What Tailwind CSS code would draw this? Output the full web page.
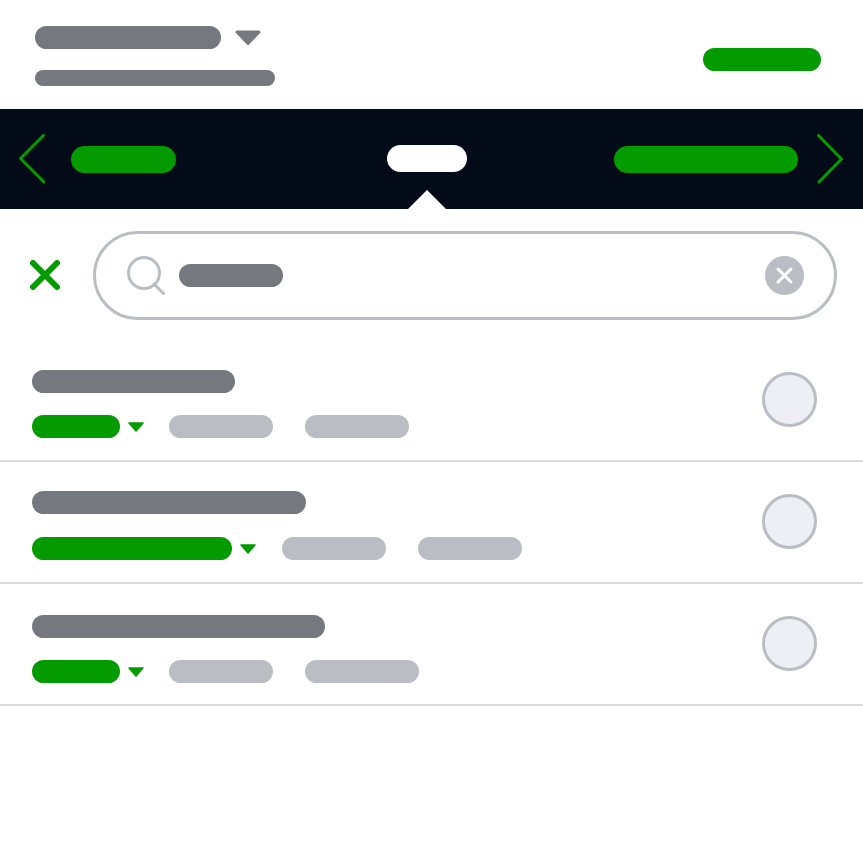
<!DOCTYPE html>
<html>
<head>
<meta charset="utf-8">
<script src="https://cdn.jsdelivr.net/npm/@tailwindcss/browser@4"></script>
</head>
<body class="bg-white">
<div class="w-[863px] h-[863px] overflow-hidden bg-white flex flex-col">
  <header class="h-[109px] shrink-0 flex items-start justify-between pl-[35px] pr-[42px]">
    <div class="pt-[26px] flex flex-col gap-[21px]">
      <div class="flex items-start gap-[14px]">
        <div class="w-[186px] h-[23px] rounded-full bg-[#76787f]"></div>
        <svg class="mt-[4px]" width="26" height="15" viewBox="0 0 26 15"><path d="M2 2H24L13 13.500Z" fill="#76787f" stroke="#76787f" stroke-width="3" stroke-linejoin="round"/></svg>
      </div>
      <div class="w-[240px] h-[16px] rounded-full bg-[#76787f]"></div>
    </div>
    <div class="mt-[48px] w-[118px] h-[23px] rounded-full bg-[#049b00]"></div>
  </header>

  <nav class="relative h-[100px] shrink-0 bg-[#030b18] flex items-center justify-between pl-[19px] pr-[20px]">
    <div class="flex items-center gap-[26px]">
      <svg width="26" height="50" viewBox="0 0 26 50" fill="none"><path d="M24.500 1.500L1.500 24.500L25 48" stroke="#049b00" stroke-width="3" stroke-linecap="round"/></svg>
      <div class="w-[105px] h-[27px] rounded-full bg-[#049b00]"></div>
    </div>
    <div class="absolute left-[387px] top-[36px] w-[80px] h-[27px] rounded-full bg-white"></div>
    <svg class="absolute left-[408px] bottom-0" width="38" height="19" viewBox="0 0 38 19"><path d="M0 19L19 0L38 19Z" fill="#fff"/></svg>
    <div class="flex items-center gap-[19px]">
      <div class="w-[184px] h-[27px] rounded-full bg-[#049b00]"></div>
      <svg width="26" height="50" viewBox="0 0 26 50" fill="none"><path d="M1.500 1.500L24.500 25L2 48" stroke="#049b00" stroke-width="3" stroke-linecap="round"/></svg>
    </div>
  </nav>

  <section class="h-[130px] shrink-0 flex items-start pl-[30px] pr-[26px] pt-[22px]">
    <svg class="mt-[29px] shrink-0" width="30" height="30" viewBox="0 0 30 30" fill="none"><path d="M3 3L27 27M27 3L3 27" stroke="#049b00" stroke-width="6" stroke-linecap="round"/></svg>
    <div class="ml-[33px] w-[744px] h-[89px] rounded-full border-[3px] border-[#babdc4] flex items-center pl-[30px] pr-[30px]">
      <svg class="shrink-0" width="40" height="42" viewBox="0 0 40 42" fill="none"><circle cx="18" cy="18" r="15.500" stroke="#babdc4" stroke-width="3"/><path d="M28 29L37.500 38.500" stroke="#babdc4" stroke-width="3" stroke-linecap="round"/></svg>
      <div class="ml-[13px] w-[104px] h-[23px] rounded-full bg-[#76787f]"></div>
      <div class="ml-auto w-[39px] h-[39px] rounded-full bg-[#babdc4] flex items-center justify-center">
        <svg width="19" height="19" viewBox="0 0 19 19" fill="none"><path d="M3 3L16 16M16 3L3 16" stroke="#fff" stroke-width="3" stroke-linecap="round"/></svg>
      </div>
    </div>
  </section>

  <ul class="flex flex-col">
    <li class="h-[123px] border-b-2 border-[#d9d9e1] flex items-start justify-between pl-[32px] pr-[46px]">
      <div class="pt-[31px] flex flex-col gap-[22px]">
        <div class="w-[203px] h-[23px] rounded-full bg-[#76787f]"></div>
        <div class="flex items-center">
          <div class="w-[88px] h-[23px] rounded-full bg-[#049b00]"></div>
          <svg class="ml-[8px]" width="16" height="10" viewBox="0 0 16 10"><path d="M1 1H15L8 9Z" fill="#049b00" stroke="#049b00" stroke-width="1.500" stroke-linejoin="round"/></svg>
          <div class="ml-[25px] w-[104px] h-[23px] rounded-full bg-[#babdc4]"></div>
          <div class="ml-[32px] w-[104px] h-[23px] rounded-full bg-[#babdc4]"></div>
        </div>
      </div>
      <div class="mt-[33px] w-[55px] h-[55px] rounded-full bg-[#eeeff4] border-[3px] border-[#babdc4]"></div>
    </li>
    <li class="h-[122px] border-b-2 border-[#d9d9e1] flex items-start justify-between pl-[32px] pr-[46px]">
      <div class="pt-[29px] flex flex-col gap-[23px]">
        <div class="w-[274px] h-[23px] rounded-full bg-[#76787f]"></div>
        <div class="flex items-center">
          <div class="w-[200px] h-[23px] rounded-full bg-[#049b00]"></div>
          <svg class="ml-[8px]" width="16" height="10" viewBox="0 0 16 10"><path d="M1 1H15L8 9Z" fill="#049b00" stroke="#049b00" stroke-width="1.500" stroke-linejoin="round"/></svg>
          <div class="ml-[26px] w-[104px] h-[23px] rounded-full bg-[#babdc4]"></div>
          <div class="ml-[32px] w-[104px] h-[23px] rounded-full bg-[#babdc4]"></div>
        </div>
      </div>
      <div class="mt-[32px] w-[55px] h-[55px] rounded-full bg-[#eeeff4] border-[3px] border-[#babdc4]"></div>
    </li>
    <li class="h-[122px] border-b-2 border-[#d9d9e1] flex items-start justify-between pl-[32px] pr-[46px]">
      <div class="pt-[31px] flex flex-col gap-[22px]">
        <div class="w-[293px] h-[23px] rounded-full bg-[#76787f]"></div>
        <div class="flex items-center">
          <div class="w-[88px] h-[23px] rounded-full bg-[#049b00]"></div>
          <svg class="ml-[8px]" width="16" height="10" viewBox="0 0 16 10"><path d="M1 1H15L8 9Z" fill="#049b00" stroke="#049b00" stroke-width="1.500" stroke-linejoin="round"/></svg>
          <div class="ml-[25px] w-[104px] h-[23px] rounded-full bg-[#babdc4]"></div>
          <div class="ml-[32px] w-[114px] h-[23px] rounded-full bg-[#babdc4]"></div>
        </div>
      </div>
      <div class="mt-[32px] w-[55px] h-[55px] rounded-full bg-[#eeeff4] border-[3px] border-[#babdc4]"></div>
    </li>
  </ul>
</div>
</body>
</html>
